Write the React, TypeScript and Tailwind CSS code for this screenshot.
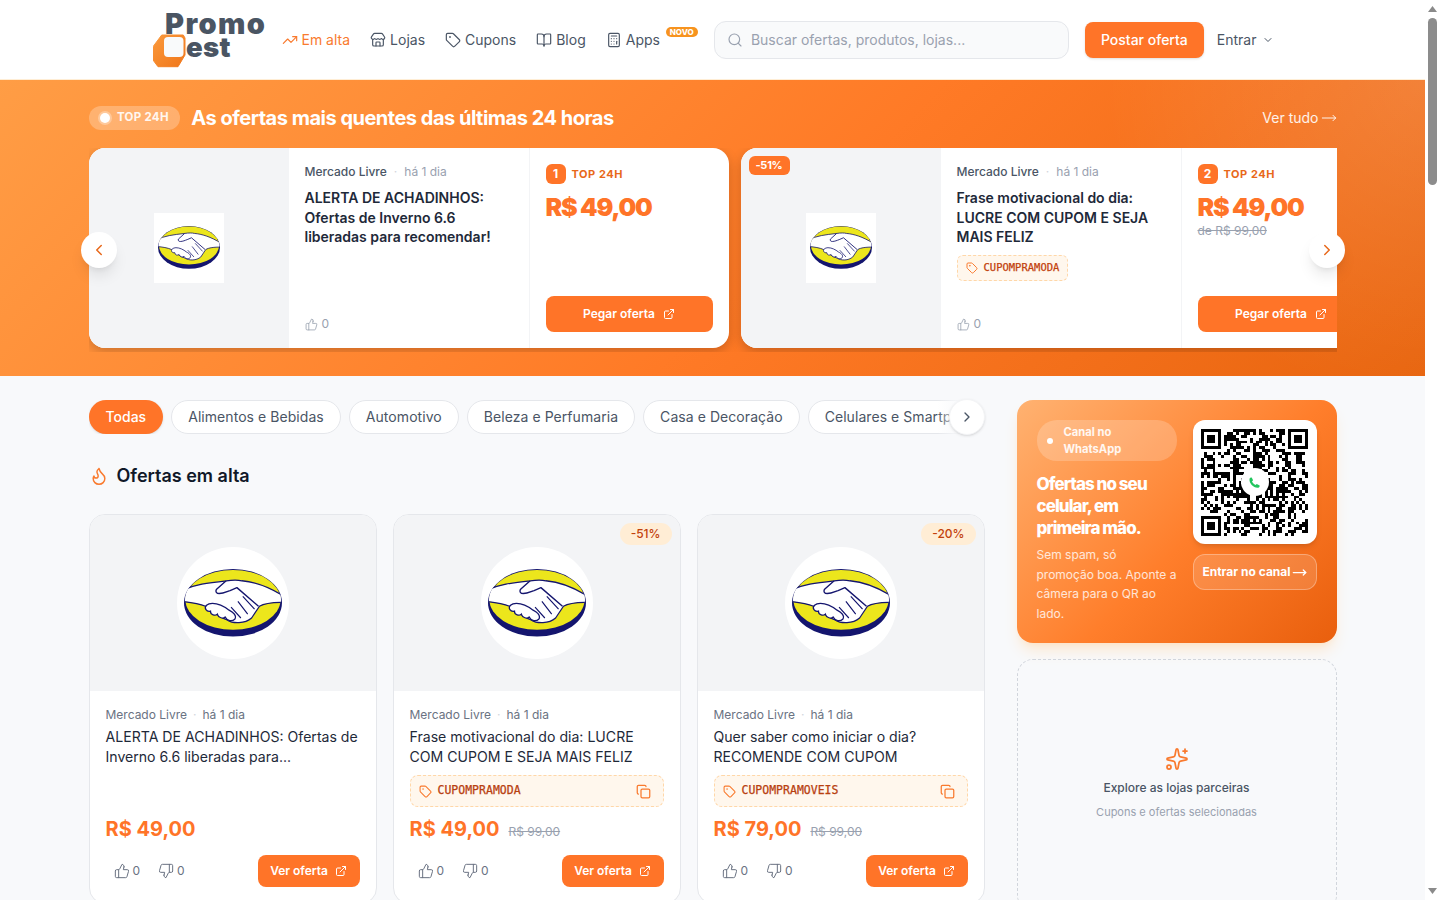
import React from "react";
import {
  BookOpen,
  Calculator,
  ChevronDown,
  ChevronLeft,
  ChevronRight,
  Copy,
  ExternalLink,
  Flame,
  MoveRight,
  Search,
  Sparkles,
  Store,
  Tag,
  ThumbsDown,
  ThumbsUp,
  TrendingUp,
} from "lucide-react";

function PromoLogo() {
  return (
    <svg width="115" height="56" viewBox="0 0 115 56" className="shrink-0">
      <defs>
        <linearGradient id="logoOrange" x1="0" y1="0" x2="1" y2="1">
          <stop offset="0" stopColor="#fb9a3c" />
          <stop offset="1" stopColor="#f0761a" />
        </linearGradient>
      </defs>
      <text x="12" y="22" fontFamily="Inter, sans-serif" fontWeight="900" fontSize="29" fill="#4a5563" letterSpacing="1.4">
        Promo
      </text>
      <text x="33" y="45" fontFamily="Inter, sans-serif" fontWeight="900" fontSize="27.5" fill="#4a5563" letterSpacing="0.3">
        est
      </text>
      <path d="M8.7 23 L30.3 23 L32 26 L32 43 L25 54.7 L5 54.7 L0 48 L0 34.7 Z" fill="url(#logoOrange)" strokeLinejoin="round" stroke="url(#logoOrange)" strokeWidth="1" />
      <rect x="11" y="25" width="19.5" height="20" rx="4" fill="#f9fafb" />
    </svg>
  );
}

function MercadoLogo({ size }: { size: number }) {
  return (
    <svg width={size} height={size * 0.7} viewBox="0 0 100 70">
      <defs>
        <clipPath id="mlClip">
          <ellipse cx="50" cy="31.5" rx="49" ry="31" />
        </clipPath>
      </defs>
      <ellipse cx="50" cy="34.5" rx="50" ry="34.5" fill="#14156e" />
      <ellipse cx="50" cy="31.5" rx="48.5" ry="30.5" fill="#ece61c" />
      <g clipPath="url(#mlClip)">
        <path
          d="M-2 22 C10 16 25 14 43 12 C50 11 55 11 59 12 C70 13 85 17 102 28 L102 34 C90 34 82 35 77 38 L69 50 C62 56 50 56 44 52 C36 50 28 42 22 38 C15 35 8 34 -2 33 Z"
          fill="#fff"
          stroke="#14156e"
          strokeWidth="1.3"
          strokeLinejoin="round"
        />
      </g>
      <path
        d="M43 12 L33 21 C32 23 33 25 36 25 C40 25 44 23 47 22 L54 19 L76 38"
        fill="none"
        stroke="#14156e"
        strokeWidth="1.4"
        strokeLinejoin="round"
      />
      <path
        d="M23 37 C20 40 23 44 27 43 C27 47 32 48 34 46 C35 50 40 51 42 49 C44 53 49 54 52 51 C54 47 50 44 46 42 C41 38 35 35 29 35 C27 35 24 36 23 37 Z"
        fill="#fff"
        stroke="#14156e"
        strokeWidth="1.3"
      />
      <path d="M72 41 L60 28 M65 46 L55 33 M58 50 L48 39" stroke="#14156e" strokeWidth="1.2" fill="none" />
    </svg>
  );
}

function QrCode() {
  const n = 37;
  const cells: { x: number; y: number }[] = [];
  let seed = 73;
  const next = () => {
    seed = (seed * 1103515245 + 12345) & 0x7fffffff;
    return (seed >> 16) & 1;
  };
  const inFinder = (x: number, y: number) =>
    (x < 8 && y < 8) || (x >= n - 8 && y < 8) || (x < 8 && y >= n - 8);
  for (let y = 0; y < n; y++) {
    for (let x = 0; x < n; x++) {
      const v = next();
      if (!inFinder(x, y) && v) cells.push({ x, y });
    }
  }
  const finder = (x: number, y: number) => (
    <g key={`${x}-${y}`}>
      <rect x={x} y={y} width="7" height="7" fill="#000" />
      <rect x={x + 1} y={y + 1} width="5" height="5" fill="#fff" />
      <rect x={x + 2} y={y + 2} width="3" height="3" fill="#000" />
    </g>
  );
  return (
    <svg width="107" height="107" viewBox="0 0 37 37" shapeRendering="crispEdges">
      {cells.map((c) => (
        <rect key={`${c.x}_${c.y}`} x={c.x} y={c.y} width="1" height="1" fill="#000" />
      ))}
      {finder(0, 0)}
      {finder(30, 0)}
      {finder(0, 30)}
    </svg>
  );
}

const navItems = [
  { label: "Lojas", icon: Store },
  { label: "Cupons", icon: Tag },
  { label: "Blog", icon: BookOpen },
];

function Header() {
  return (
    <header className="h-20 border-b border-orange-100 bg-white">
      <div className="mx-auto flex h-full max-w-6xl items-center px-4 text-sm whitespace-nowrap text-gray-600">
        <PromoLogo />
        <nav className="ml-[14px] flex items-center gap-5">
          <a className="flex items-center gap-1 text-[#f97a2e]">
            <TrendingUp size={16} strokeWidth={1.75} />
            Em alta
          </a>
          {navItems.map((item) => (
            <a key={item.label} className="flex items-center gap-1">
              <item.icon size={16} strokeWidth={1.75} />
              {item.label}
            </a>
          ))}
          <a className="relative flex items-center gap-1">
            <Calculator size={16} strokeWidth={1.75} />
            Apps
            <span className="absolute top-[-3px] left-[60px] rounded-full bg-[#f7931e] px-[4px] text-[8px] leading-[10px] font-extrabold text-white">
              NOVO
            </span>
          </a>
        </nav>
        <div className="ml-[54px] flex h-[38px] w-[355px] shrink-0 items-center gap-2 rounded-xl border border-gray-200 bg-gray-50 px-3 text-gray-400">
          <Search size={16} strokeWidth={1.75} />
          <span>Buscar ofertas, produtos, lojas...</span>
        </div>
        <button className="ml-4 h-9 shrink-0 rounded-lg bg-[#ff7428] px-4 font-medium text-white shadow-sm">Postar oferta</button>
        <button className="ml-[13px] flex items-center gap-1.5">
          Entrar
          <ChevronDown size={12} />
        </button>
      </div>
    </header>
  );
}

interface HotDeal {
  rank: number;
  title: string;
  discount?: string;
  coupon?: string;
  oldPrice?: string;
}

const hotDeals: HotDeal[] = [
  { rank: 1, title: "ALERTA DE ACHADINHOS: Ofertas de Inverno 6.6 liberadas para recomendar!" },
  {
    rank: 2,
    title: "Frase motivacional do dia: LUCRE COM CUPOM E SEJA MAIS FELIZ",
    discount: "-51%",
    coupon: "CUPOMPRAMODA",
    oldPrice: "de R$ 99,00",
  },
];

function HotCard({ deal }: { deal: HotDeal }) {
  return (
    <div className="flex h-[200px] w-[640px] shrink-0 overflow-hidden rounded-2xl bg-white shadow-[0_4px_12px_rgba(0,0,0,0.2)]">
      <div className="relative flex w-[200px] shrink-0 items-center justify-center bg-[#f3f4f6]">
        {deal.discount && (
          <span className="absolute top-2 left-2 rounded-md bg-[#ff7428] px-[7px] py-[3px] text-[11px] leading-[13px] font-bold tracking-tight text-white">
            {deal.discount}
          </span>
        )}
        <div className="flex h-[70px] w-[70px] items-center justify-center bg-white">
          <MercadoLogo size={62} />
        </div>
      </div>
      <div className="flex w-[240px] shrink-0 flex-col px-4 pt-4 pb-4">
        <div className="flex items-center gap-[7px] text-xs leading-4">
          <span className="font-medium text-gray-600">Mercado Livre</span>
          <span className="text-gray-300">·</span>
          <span className="text-gray-400">há 1 dia</span>
        </div>
        <p className="mt-2 text-sm leading-[19.6px] font-semibold text-gray-800">{deal.title}</p>
        {deal.coupon && (
          <span className="mt-2 flex h-[26px] w-fit items-center gap-1.5 rounded-md border border-dashed border-orange-200 bg-orange-50 px-2 font-['DejaVu_Sans_Mono',monospace] text-[10.5px] text-[#c2410c] [-webkit-text-stroke:0.25px_#c2410c]">
            <Tag size={12} className="text-[#f97a2e]" />
            {deal.coupon}
          </span>
        )}
        <div className="mt-auto flex items-center gap-1 text-xs text-gray-400">
          <ThumbsUp size={13} strokeWidth={1.5} />0
        </div>
      </div>
      <div className="flex w-[200px] shrink-0 flex-col border-l border-gray-100 px-4 pt-4 pb-4">
        <div className="flex items-center gap-[6px]">
          <span className="flex h-5 w-5 items-center justify-center rounded-md bg-[#ff7428] text-xs font-bold text-white">
            {deal.rank}
          </span>
          <span className="text-[11px] font-bold tracking-[0.05em] text-[#e8681a]">TOP 24H</span>
        </div>
        <div className="mt-[7px] text-[25px] leading-8 font-black tracking-[-0.05em] text-[#ff7428]">R$ 49,00</div>
        {deal.oldPrice && <div className="text-xs text-gray-400 line-through">{deal.oldPrice}</div>}
        <button className="mt-auto flex h-9 items-center justify-center gap-2 rounded-lg bg-[#ff7428] text-xs font-semibold text-white">
          Pegar oferta
          <ExternalLink size={12} />
        </button>
      </div>
    </div>
  );
}

function Hero() {
  return (
    <section className="bg-[radial-gradient(circle_at_100%_0%,rgba(255,255,255,0.14),transparent_22%),linear-gradient(135deg,#ff9d45_0%,#ff7a26_55%,#e8650f_100%)] pt-[26px] pb-6">
      <div className="mx-auto max-w-[1280px] px-4">
        <div className="flex h-6 items-center">
          <span className="flex h-6 items-center gap-[7px] rounded-full bg-white/25 px-[11.5px] text-[11.5px] font-bold tracking-wide text-white/90">
            <span className="h-[10px] w-[10px] rounded-full bg-white shadow-[0_0_0_2px_rgba(255,255,255,0.3)]" />
            TOP 24H
          </span>
          <h2 className="ml-[11px] text-[20px] font-bold tracking-tight text-white">
            As ofertas mais quentes das últimas 24 horas
          </h2>
          <a className="ml-auto flex items-center gap-0.5 text-sm text-white/90">
            Ver tudo
            <MoveRight size={16} strokeWidth={1.5} />
          </a>
        </div>
        <div className="relative mt-[18px]">
          <div className="flex gap-3 overflow-hidden pb-1">
            {hotDeals.map((d) => (
              <HotCard key={d.rank} deal={d} />
            ))}
          </div>
          <button className="absolute top-[84px] left-[-8px] flex h-9 w-9 items-center justify-center rounded-full bg-white text-[#e8681a] shadow-lg">
            <ChevronLeft size={18} />
          </button>
          <button className="absolute top-[84px] right-[-8px] flex h-9 w-9 items-center justify-center rounded-full bg-white text-[#e8681a] shadow-lg">
            <ChevronRight size={18} />
          </button>
        </div>
      </div>
    </section>
  );
}

const categories = [
  "Alimentos e Bebidas",
  "Automotivo",
  "Beleza e Perfumaria",
  "Casa e Decoração",
  "Celulares e Smartphones",
];

function Categories() {
  return (
    <div className="relative">
      <div className="flex gap-2 overflow-hidden">
        <button className="h-[34px] shrink-0 rounded-full bg-[#ff7428] px-[17px] text-sm font-medium text-white shadow-sm">
          Todas
        </button>
        {categories.map((c) => (
          <button
            key={c}
            className="h-[34px] shrink-0 rounded-full border border-gray-200 bg-white px-4 text-sm tracking-[0.06px] text-gray-600"
          >
            {c}
          </button>
        ))}
      </div>
      <div className="absolute top-0 right-0 flex h-[34px] w-[48px] items-center justify-end bg-gradient-to-r from-transparent to-[#f8f9fb] to-50%">
        <span className="flex h-9 w-9 items-center justify-center rounded-full border border-gray-100 bg-white text-gray-600 shadow-sm">
          <ChevronRight size={16} />
        </span>
      </div>
    </div>
  );
}

interface Offer {
  title: string;
  price: string;
  coupon?: string;
  discount?: string;
}

const offers: Offer[] = [
  { title: "ALERTA DE ACHADINHOS: Ofertas de Inverno 6.6 liberadas para...", price: "R$ 49,00" },
  {
    title: "Frase motivacional do dia: LUCRE COM CUPOM E SEJA MAIS FELIZ",
    price: "R$ 49,00",
    coupon: "CUPOMPRAMODA",
    discount: "-51%",
  },
  {
    title: "Quer saber como iniciar o dia? RECOMENDE COM CUPOM",
    price: "R$ 79,00",
    coupon: "CUPOMPRAMOVEIS",
    discount: "-20%",
  },
];

function OfferCard({ offer }: { offer: Offer }) {
  return (
    <article className="overflow-hidden rounded-2xl border border-gray-200 bg-white">
      <div className="relative flex h-[176px] items-center justify-center bg-[#f3f4f6]">
        {offer.discount && (
          <span className="absolute top-2 right-2 rounded-full bg-[#ffedd5] px-[11px] py-[3px] text-xs leading-4 font-medium text-[#c2410c]">
            {offer.discount}
          </span>
        )}
        <div className="flex h-28 w-28 items-center justify-center rounded-full bg-white">
          <MercadoLogo size={98} />
        </div>
      </div>
      <div className="px-4 pt-4 pb-4">
        <div className="flex items-center gap-1.5 text-xs leading-4 text-gray-500">
          <span>Mercado Livre</span>
          <span className="text-gray-300">·</span>
          <span>há 1 dia</span>
        </div>
        <h3 className="mt-1 h-10 text-[14.1px] leading-5 text-gray-800">{offer.title}</h3>
        <div className="mt-2 h-8">
          {offer.coupon && (
            <div className="flex h-8 items-center gap-[6px] rounded-lg border border-dashed border-orange-200 bg-orange-50 px-2">
              <Tag size={13} className="text-[#f97a2e]" />
              <span className="font-['DejaVu_Sans_Mono',monospace] text-[11.5px] text-[#b8400f] [-webkit-text-stroke:0.25px_#b8400f]">
                {offer.coupon}
              </span>
              <Copy size={15} className="ml-auto mr-1 text-[#f97a2e]" />
            </div>
          )}
        </div>
        <div className="mt-[6px] flex items-baseline gap-[9px]">
          <span className="text-[20px] leading-8 font-bold text-[#ff7428]">{offer.price}</span>
          {offer.coupon && <span className="text-xs text-gray-400 line-through">R$ 99,00</span>}
        </div>
        <div className="mt-[10px] flex items-center">
          <span className="ml-2 flex items-center gap-[3px] text-xs text-gray-500">
            <ThumbsUp size={16} strokeWidth={1.5} />0
          </span>
          <span className="ml-[18px] flex items-center gap-[3px] text-xs text-gray-500">
            <ThumbsDown size={16} strokeWidth={1.5} />0
          </span>
          <button className="ml-auto flex h-8 items-center gap-[7px] rounded-lg bg-[#ff7428] px-[12.5px] text-xs font-semibold text-white">
            Ver oferta
            <ExternalLink size={12} />
          </button>
        </div>
      </div>
    </article>
  );
}

function WhatsappCard() {
  return (
    <div className="flex h-[243px] gap-4 rounded-2xl bg-[linear-gradient(135deg,#ffb271_0%,#ff7e2b_55%,#e95f0d_100%)] p-5 shadow-lg shadow-orange-200/50">
      <div className="w-[140px]">
        <span className="flex items-center gap-[11px] rounded-[20px] bg-white/20 px-[10px] pt-1 pb-[3px] text-[11.2px] leading-[17px] font-bold text-white/90">
          <span className="h-[6px] w-[6px] shrink-0 rounded-full bg-white" />
          Canal no WhatsApp
        </span>
        <h3 className="mt-3 text-[17px] leading-[22px] font-extrabold tracking-[-0.055em] text-white">
          Ofertas no seu celular, em primeira mão.
        </h3>
        <p className="mt-[6px] text-xs leading-[19.5px] text-white/80">
          Sem spam, só promoção boa. Aponte a câmera para o QR ao lado.
        </p>
      </div>
      <div className="w-[124px] shrink-0">
        <div className="relative flex h-[124px] items-center justify-center rounded-xl bg-white shadow-md">
          <QrCode />
          <span className="absolute flex h-7 w-7 items-center justify-center rounded-full bg-white">
            <svg width="13" height="13" viewBox="0 0 24 24" fill="#22c55e">
              <path d="M6.6 2.5 9.4 7.8 7.4 10.2c1.2 2.7 3.5 5.1 6.4 6.4l2.4-2 5.3 2.8c.3 1.9-.8 3.9-2.6 4.3-8.2 1.1-17.2-7.9-16.1-16.1.4-1.8 2.1-2.9 3.8-2.6z" />
            </svg>
          </span>
        </div>
        <button className="mt-[10px] flex h-9 w-full items-center justify-center rounded-xl border border-white/30 bg-white/15 text-xs font-bold text-white">
          Entrar no canal
          <MoveRight size={15} strokeWidth={2} className="ml-px" />
        </button>
      </div>
    </div>
  );
}

function ScrollBar() {
  return (
    <div className="fixed top-0 right-0 bottom-0 w-[15px] bg-white">
      <svg width="9" height="6" viewBox="0 0 9 6" className="absolute top-[6px] left-[3px]">
        <path d="M4.5 0 L9 6 L0 6 Z" fill="#8a8a8a" />
      </svg>
      <div className="absolute top-[18px] left-[3px] h-[167px] w-[9px] rounded-full bg-[#8c8c8c]" />
      <svg width="9" height="6" viewBox="0 0 9 6" className="absolute bottom-[6px] left-[3px]">
        <path d="M0 0 L9 0 L4.5 6 Z" fill="#8a8a8a" />
      </svg>
    </div>
  );
}

export default function App() {
  return (
    <div className="bg-white pr-[15px] font-['Inter',sans-serif]">
      <div className="bg-[#f8f9fb] pb-10">
        <Header />
        <Hero />
        <main className="mx-auto flex max-w-[1280px] gap-8 px-4 pt-6">
          <div className="w-[896px] shrink-0">
            <Categories />
            <div className="mt-[28px] flex items-center gap-2">
              <Flame size={20} strokeWidth={1.75} className="text-[#f97a2e]" />
              <h2 className="text-lg font-semibold text-gray-900">Ofertas em alta</h2>
            </div>
            <div className="mt-6 grid grid-cols-3 gap-4">
              {offers.map((o) => (
                <OfferCard key={o.title} offer={o} />
              ))}
            </div>
          </div>
          <aside className="w-[320px] shrink-0">
            <WhatsappCard />
            <div className="mt-4 flex h-[252px] flex-col items-center justify-center rounded-2xl border border-dashed border-gray-300 pb-1">
              <Sparkles size={24} strokeWidth={1.75} className="text-[#f97a2e]" />
              <p className="mt-[7px] text-xs leading-5 font-medium text-gray-600">Explore as lojas parceiras</p>
              <p className="mt-1.5 text-[11px] leading-4 text-gray-400">Cupons e ofertas selecionadas</p>
            </div>
          </aside>
        </main>
      </div>
      <ScrollBar />
    </div>
  );
}
